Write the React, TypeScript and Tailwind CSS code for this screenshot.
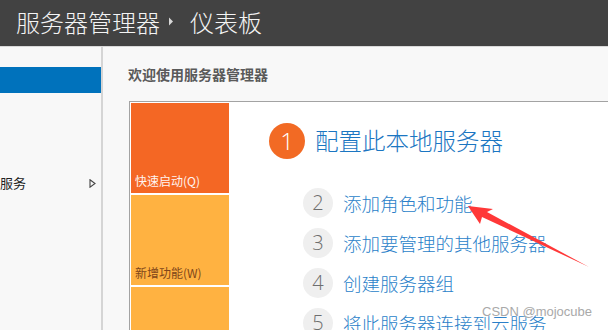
import React from "react";

const cjk = { fontFamily: '"Noto Sans CJK SC", "Noto Sans", sans-serif' };
const num = { fontFamily: '"Open Sans", "Noto Sans", sans-serif' };

const items = ["添加角色和功能", "添加要管理的其他服务器", "创建服务器组", "将此服务器连接到云服务"];

export default function App() {
  return (
    <div className="relative w-[608px] h-[330px] overflow-hidden bg-[#f8f8f8]" style={cjk}>
      <div className="h-[47px] bg-[#424242] border-b border-[#d9d9d9] flex items-center pl-[16px] pb-[3px] text-[24px] font-light text-[#f4f4f4] leading-none">
        <span>服务器管理器</span>
        <svg width="6" height="9" viewBox="0 0 6 9" className="ml-[8px] mr-[16px]">
          <path d="M1 0.5 L5 4.5 L1 8.5 Z" fill="#d8d8d8" />
        </svg>
        <span>仪表板</span>
      </div>
      <div className="flex h-[283px]">
        <div className="w-[101px] flex flex-col">
          <div className="mt-[20px] h-[26px] bg-[#0072bc]" />
          <div className="mt-[77px] h-[26px] flex items-center justify-between pr-[5px] text-[13px] text-[#222]">
            <span>服务</span>
            <svg width="7" height="9" viewBox="0 0 7 9">
              <path d="M1 0.8 L6 4.5 L1 8.2 Z" fill="none" stroke="#444" strokeWidth="1.1" />
            </svg>
          </div>
        </div>
        <div className="w-[2px] bg-[#d5d5d5]" />
        <div className="flex-1 flex flex-col pl-[26px]">
          <div className="mt-[17px] h-[20px] flex items-center -ml-[1px] text-[14px] font-bold text-[#5a5a5a]">
            欢迎使用服务器管理器
          </div>
          <div className="mt-[17px] flex-1 border-l border-t border-[#a3a3a3] bg-white flex p-[1px]">
            <div className="w-[98px] flex flex-col gap-[2px]">
              <div className="h-[90px] bg-[#f46724] flex items-end pl-[4px] pb-[4px] text-[12px] leading-[16px] text-[#fff4f0]">
                快速启动(Q)
              </div>
              <div className="h-[90px] bg-[#ffb241] flex items-end pl-[4px] pb-[4px] text-[12px] leading-[16px] text-[#80461a]">
                新增功能(W)
              </div>
              <div className="h-[90px] bg-[#ffb241]" />
            </div>
            <div className="flex flex-col pl-[40px] pt-[20px]">
              <div className="flex items-center gap-[10px]">
                <div className="w-[36px] h-[36px] rounded-full bg-[#f26a24] flex items-center justify-center text-[24px] font-light text-white leading-none" style={num}>
                  1
                </div>
                <span className="text-[23.5px] font-light text-[#1b76c2] leading-none">配置此本地服务器</span>
              </div>
              <div className="mt-[24px] pl-[34px] flex flex-col">
                {items.map((t, i) => (
                  <div key={t} className="h-[40px] flex items-center gap-[10px]">
                    <div className="w-[30px] h-[30px] rounded-full bg-[#efefef] flex items-center justify-center text-[20px] font-light text-[#6e6e6e] leading-none" style={num}>
                      {i + 2}
                    </div>
                    <span className="text-[18.5px] font-light text-[#2a7fc9] leading-none whitespace-nowrap">{t}</span>
                  </div>
                ))}
              </div>
            </div>
          </div>
        </div>
      </div>
      <svg className="absolute left-0 top-0 pointer-events-none" width="608" height="330" viewBox="0 0 608 330">
        <polygon points="468,206 493,209 487,212 589,267 482,217 480,224" fill="#ff3838" />
      </svg>
      <div
        className="absolute left-[482px] top-[303px] text-[13px] leading-[18px] text-[#a9a9a9]"
        style={{ fontFamily: '"Liberation Sans", Arial, sans-serif', textShadow: "0 0 2px #fff" }}
      >
        CSDN @mojocube
      </div>
    </div>
  );
}
